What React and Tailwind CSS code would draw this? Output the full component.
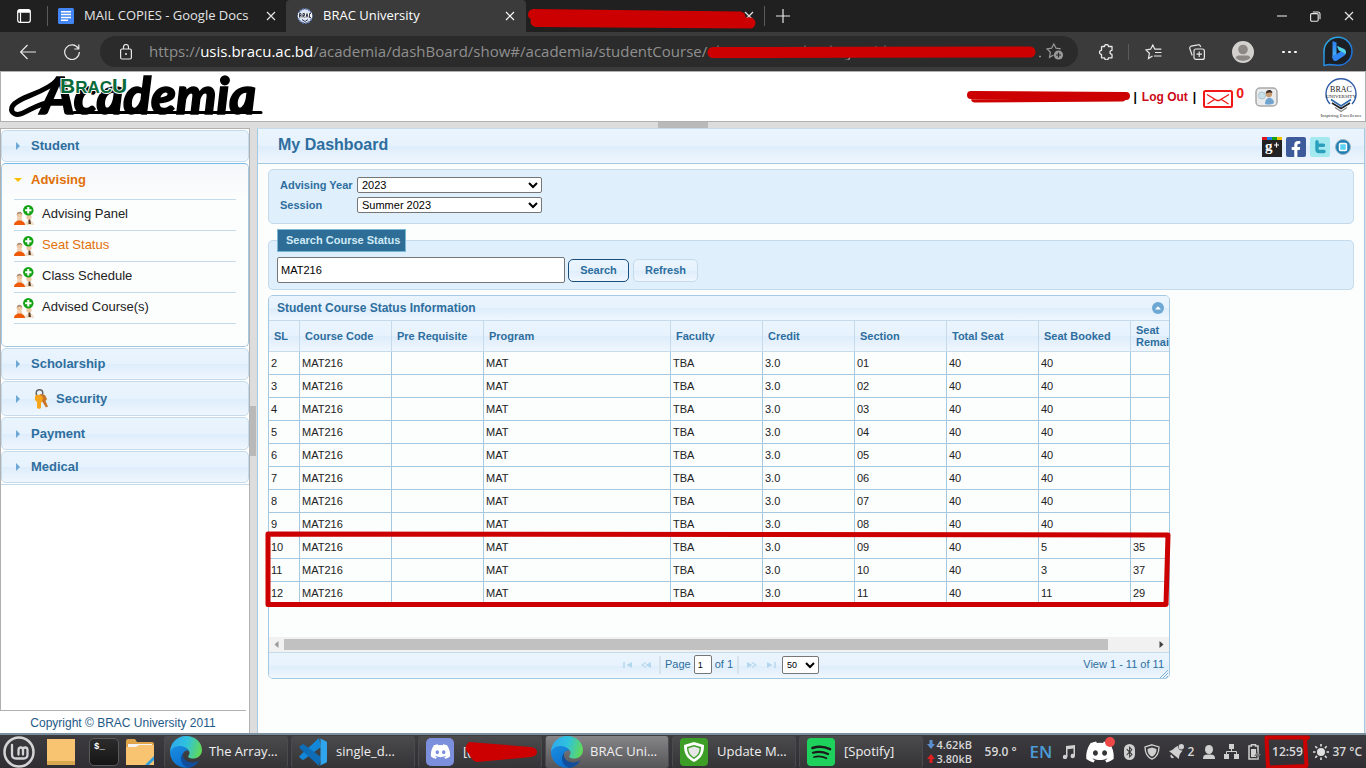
import React from "react";
import { FaDiscord, FaBluetoothB, FaFacebookF } from "react-icons/fa";

const glass = "bg-[linear-gradient(#eaf4fd_0%,#e6f2fd_50%,#deedfb_51%,#eff6fe_100%)]";
const ui = "font-['Open_Sans','Noto_Sans',sans-serif]";

function Close({ className = "" }) {
  return (
    <svg viewBox="0 0 10 10" className={"h-[10px] w-[10px] " + className} fill="none" stroke="currentColor" strokeWidth="1.2">
      <path d="M1 1l8 8M9 1L1 9" />
    </svg>
  );
}

function BracSeal() {
  return (
    <svg viewBox="0 0 16 16" className="h-4 w-4">
      <circle cx="8" cy="8" r="7" fill="#dfe6f3" stroke="#6d86c4" strokeWidth="1.6" strokeDasharray="2 1" />
      <path d="M1 5h14v5H1z" fill="#f4f4f4" />
      <path d="M2.500 9.500V5.500h1.500v4M2.500 7.500H4M6 9.500v-4h1.500v2L6 7.500l1.500 2M9 9.500l1-4 1 4M14 5.500h-1.500v4H14M5 11.500l3 2 3-2" fill="none" stroke="#333a50" strokeWidth="1" />
    </svg>
  );
}

function TabStrip() {
  return (
    <div className={"flex h-8 shrink-0 items-center bg-[#202020] text-[13px] text-[#e4e4e4] " + ui}>
      <button aria-label="Tab actions" className="flex h-5 w-12 shrink-0 items-center justify-center border-r border-[#5a5a5a] text-white">
        <svg viewBox="0 0 14 14" className="h-[14px] w-[14px]" fill="none" stroke="currentColor" strokeWidth="1.200">
          <rect x="0.700" y="0.700" width="12.600" height="12.600" rx="2" />
          <path d="M1 1.800h12M1 3h12" strokeWidth="1.600" />
          <path d="M3.500 3.500V13" />
        </svg>
      </button>
      <div className="flex h-8 w-[238px] shrink-0 items-center px-[10px]">
        <svg viewBox="0 0 16 16" className="h-4 w-4 shrink-0">
          <rect width="16" height="16" rx="1.500" fill="#4285f4" />
          <path d="M3 3.800h10M3 6.600h10M3 9.400h10M3 12.200h7" stroke="#fff" strokeWidth="1.500" />
        </svg>
        <span className="ml-[10px] flex-1 whitespace-nowrap">MAIL COPIES - Google Docs</span>
        <button aria-label="Close tab"><Close /></button>
      </div>
      <div className="flex h-8 w-[240px] shrink-0 items-center rounded-t-[4px] bg-[#3b3b3b] px-[11px] text-white">
        <BracSeal />
        <span className="ml-[10px] flex-1 whitespace-nowrap">BRAC University</span>
        <button aria-label="Close tab"><Close /></button>
      </div>
      <div className="relative flex h-8 w-[238px] shrink-0 items-center justify-end pr-[10px]">
        <button aria-label="Close tab"><Close /></button>
        <svg viewBox="0 0 230 22" className="absolute left-[1px] top-2 h-[22px] w-[230px]" fill="none" stroke="#cc0000" strokeLinecap="round" strokeLinejoin="round" strokeWidth="11">
          <path d="M6.500 6.500L213 9" />
          <path d="M9 13.500L223 15" />
        </svg>
      </div>
      <div className="h-5 w-px bg-[#5a5a5a]" />
      <button aria-label="New tab" className="ml-[11px]">
        <svg viewBox="0 0 14 14" className="h-[14px] w-[14px]" stroke="#e8e8e8" strokeWidth="1.200"><path d="M7 0v14M0 7h14" /></svg>
      </button>
      <div className="ml-auto flex items-center gap-[21px] pr-3">
        <button aria-label="Minimize" className="mr-[2px] h-[2px] w-[10px] bg-[#8a8a8a]" />
        <button aria-label="Restore" className="mr-[2px]">
          <svg viewBox="0 0 11 11" className="h-[11px] w-[11px]" fill="none" stroke="#e8e8e8" strokeWidth="1.100">
            <rect x="0.600" y="2.600" width="7.600" height="7.600" rx="1.200" />
            <path d="M2.800 1h5a2 2 0 0 1 2.200 2.200v5" />
          </svg>
        </button>
        <button aria-label="Close window">
          <Close className="h-3 w-3" />
        </button>
      </div>
    </div>
  );
}

function Toolbar() {
  return (
    <div className={"flex h-[39px] shrink-0 items-center bg-[#3b3b3b] pl-5 pr-[13px] text-[#e8e8e8] " + ui}>
      <button aria-label="Back">
        <svg viewBox="0 0 16 16" className="h-4 w-4" fill="none" stroke="currentColor" strokeWidth="1.200"><path d="M16 8H.8M7.500 1L.6 8l6.900 7" /></svg>
      </button>
      <button aria-label="Refresh page" className="ml-7">
        <svg viewBox="0 0 16 16" className="h-4 w-4" fill="none" stroke="currentColor" strokeWidth="1.200"><path d="M14.300 4.500A7.300 7.300 0 1 0 15.300 8M14.800 .500v4.500h-4.500" /></svg>
      </button>
      <div className="ml-5 flex h-[31px] flex-1 items-center rounded-full bg-[#2b2b2b] pl-5 pr-[14px] text-[15px]">
        <svg viewBox="0 0 12 16" className="h-4 w-3 shrink-0" fill="none" stroke="currentColor" strokeWidth="1.200">
          <rect x="0.600" y="5" width="10.800" height="10" rx="1.500" />
          <path d="M3.500 5V3a2.500 2.500 0 0 1 5 0v2" />
          <circle cx="6" cy="10" r="1" fill="currentColor" stroke="none" />
        </svg>
        <span className="ml-[17px] whitespace-nowrap text-[#8f8f8f]">
          https://<span className="text-white">usis.bracu.ac.bd</span>/academia/dashBoard/show#/academia/studentCourse/
        </span>
        <svg viewBox="0 0 335 16" preserveAspectRatio="none" className="h-4 min-w-0 max-w-[335px] flex-1">
          <path d="M11 1.500v3M98 1.500v3M124 1.500v3M169 2v3M178 1.500v3" stroke="#777" strokeWidth="1.200" />
          <path d="M143 13l-1.500 3-3 .2M332 12.500h2" stroke="#8f8f8f" strokeWidth="1.500" fill="none" />
          <path d="M6 8.500L150 8.200L323 8" stroke="#cc0000" strokeWidth="11" strokeLinecap="round" />
        </svg>
        <button aria-label="Add to favorites" className="ml-auto text-[#9a9a9a]">
          <svg viewBox="0 0 18 17" className="h-[17px] w-[18px]" fill="none" stroke="currentColor" strokeWidth="1.200">
            <path d="M7.500 12l-4 2.300.900-5L.9 5.900l4.700-.7L7.800 1l2.200 4.200 4.700.7" />
            <circle cx="12.500" cy="12" r="4.600" fill="currentColor" stroke="none" />
            <path d="M12.500 9.500v5M10 12h5" stroke="#2b2b2b" />
          </svg>
        </button>
      </div>
      <button aria-label="Extensions" className="ml-5">
        <svg viewBox="0 0 16 16" className="h-4 w-4" fill="none" stroke="currentColor" strokeWidth="1.300" strokeLinejoin="round">
          <path d="M4 2.500h2.500a2 2 0 0 1 4 0H14V6.300a2 2 0 0 0 0 4v3.500h-3.500a2 2 0 0 1-4 0H3.500v-3.500a2 2 0 0 1 0-4V3z" />
        </svg>
      </button>
      <div className="ml-[14px] h-4 w-px bg-[#5a5a5a]" />
      <button aria-label="Favorites" className="ml-4">
        <svg viewBox="0 0 17 16" className="h-4 w-[17px]" fill="none" stroke="currentColor" strokeWidth="1.200">
          <path d="M7.500 12l-4 2.500.900-5.200L.9 5.900l4.700-.7L7.800 1l2 4.200h6.500M10 8.500h6.500M9 12h7.500" />
        </svg>
      </button>
      <button aria-label="Collections" className="ml-[27px]">
        <svg viewBox="0 0 16 16" className="h-4 w-4" fill="none" stroke="currentColor" strokeWidth="1.200">
          <rect x="5" y="5" width="10.400" height="10.400" rx="2" />
          <path d="M10.200 7.500v5.500M7.500 10.200H13M3.200 11.500L.8 4.500a2 2 0 0 1 1.200-2.300L9 .8a2 2 0 0 1 2.300 1.200l.3 1" />
        </svg>
      </button>
      <button aria-label="Profile" className="ml-[27px]">
        <svg viewBox="0 0 22 22" className="h-[22px] w-[22px]">
          <circle cx="11" cy="11" r="11" fill="#d3d1ce" />
          <circle cx="11" cy="8.500" r="4.800" fill="#8b8885" />
          <path d="M3.500 17c1-2 2-2.500 4-2.500h7c2 0 3 .5 4 2.500a11 11 0 0 1-15 0z" fill="#8b8885" />
        </svg>
      </button>
      <button aria-label="Settings and more" className="ml-7 flex gap-[3px]">
        <i className="h-[2px] w-[3px] rounded-full bg-white" /><i className="h-[2px] w-[3px] rounded-full bg-white" /><i className="h-[2px] w-[3px] rounded-full bg-white" />
      </button>
      <button aria-label="Bing" className="ml-[26px]">
        <svg viewBox="0 0 30 31" className="h-[31px] w-[30px]">
          <defs>
            <linearGradient id="bing" x1="0" y1="0" x2="1" y2="1"><stop offset="0" stopColor="#2fb6ea" /><stop offset="1" stopColor="#1b62d8" /></linearGradient>
            <linearGradient id="bb" x1="0" y1="0" x2="0" y2="1"><stop offset="0" stopColor="#2a7bf0" /><stop offset="1" stopColor="#49b8f5" /></linearGradient>
          </defs>
          <path d="M1 29.500V15A14 14 0 1 1 15 29.300L6 28.500z" fill="#1c2025" stroke="url(#bing)" strokeWidth="1.500" strokeLinejoin="round" />
          <path d="M9.500 5l4 1.500v13l-4 2.500z" fill="url(#bb)" />
          <path d="M9.500 20l4-2 4.500-2.500-2-1-2-4.500 7 3c2.500 1.500 2.500 5 .5 6.500L14 24.500c-2.500 1.500-4.500-.5-4.500-2.500z" fill="#2f86f5" />
          <path d="M14 10l7 3c2 1.200 2.500 3.500 1.300 5.200-1-1.700-2.800-2.200-4.300-2.700l-2-1z" fill="#58d6e2" />
        </svg>
      </button>
    </div>
  );
}

function AcademiaLogo() {
  return (
    <a href="#home" className="relative block h-12 w-[260px]">
      <svg viewBox="0 0 260 48" className="h-12 w-[260px] overflow-visible">
        <path d="M48 8C38 20 8 24 4 34c-2 7 5 9 11 6 9-4 17-10 29-11" fill="none" stroke="#000" strokeWidth="5" strokeLinecap="round" />
        <path d="M66 39.500h187" stroke="#000" strokeWidth="3" strokeLinecap="round" />
        <text x="33" y="41" fontFamily="Lato" fontStyle="italic" fontWeight="900" fontSize="51" fill="#000" stroke="#000" strokeWidth="1.500">Academia</text>
        <text x="52" y="20" fontFamily="Liberation Sans" fontWeight="700" fontSize="21" fill="#0a6b3a" stroke="#fff" strokeWidth="2" paintOrder="stroke">B<tspan fontSize="17">RAC</tspan>U</text>
      </svg>
    </a>
  );
}

function PageHeader() {
  return (
    <header className="flex h-[51px] shrink-0 items-center border border-[#b0b0b0] bg-white pl-[7px] pr-[3px]">
      <AcademiaLogo />
      <div className="ml-auto flex items-center text-[12px] font-bold text-black">
        <svg viewBox="0 0 166 16" className="h-4 w-[166px]" fill="none" stroke="#cc0000" strokeLinecap="round" strokeWidth="8">
          <path d="M5 6L160 7M9 9.500L156 8.500" />
        </svg>
        <span className="ml-[2px]">|</span>
        <a href="#logout" className="mx-[5px] text-[#cc0a18]">Log Out</a>
        <span>|</span>
        <a href="#messages" aria-label="Messages" className="ml-[7px] mt-1">
          <svg viewBox="0 0 30 18" className="h-[18px] w-[30px]" fill="none" stroke="#f01818">
            <rect x="1" y="1" width="28" height="16" rx="1.500" strokeWidth="2" />
            <path d="M4 4.500l10 6 2 0 10-6M4.500 14l7-4.500M25.500 14l-7-4.500" strokeWidth="1.300" />
          </svg>
        </a>
        <span className="mb-[6px] ml-[3px] text-[14px] text-[#f01818]">0</span>
        <a href="#profile" aria-label="Profile card" className="ml-[11px]">
          <svg viewBox="0 0 23 20" className="h-5 w-[23px]">
            <rect x="1" y="1" width="21" height="18" rx="4" fill="#e9ebed" stroke="#a9a9a9" strokeWidth="1.500" />
            <circle cx="7" cy="8.500" r="3.500" fill="#c9dfe8" stroke="#a9c4d2" />
            <circle cx="14" cy="7" r="3.200" fill="#c79a72" />
            <path d="M10.800 6.500c0-4.500 6.600-4.500 6.600-.5-2-.8-4-1-6.600.5z" fill="#3b2c25" />
            <path d="M10 17c0-8 9-8 9-1-2 1.500-6 2-9 1z" fill="#6fa3d0" />
          </svg>
        </a>
        <svg viewBox="0 0 42 42" className="ml-[42px] h-[42px] w-[42px] overflow-visible">
          <path d="M10 28A15 15 0 1 1 32 28" fill="none" stroke="#2f5aa5" strokeWidth="1.400" />
          <text x="21" y="16" textAnchor="middle" fontFamily="Liberation Serif" fontWeight="400" fontSize="8" fill="#222">BRAC</text>
          <text x="21" y="22" textAnchor="middle" fontFamily="Liberation Serif" fontWeight="400" fontSize="5" fill="#222">UNIVERSITY</text>
          <path d="M11 23.500l10 6.500 10-6.500" fill="none" stroke="#2f6ab0" strokeWidth="1.600" />
          <path d="M12 27l9 5.500 9-5.500" fill="none" stroke="#222" strokeWidth="1.500" />
          <path d="M15 31.500l6 4 6-4" fill="none" stroke="#8a8a8a" strokeWidth="1.300" />
          <text x="21" y="41" textAnchor="middle" fontFamily="Liberation Serif" fontWeight="400" fontSize="5" fill="#333">Inspiring Excellence</text>
        </svg>
      </div>
    </header>
  );
}

function UsersIcon() {
  return (
    <svg viewBox="0 0 20 20" className="h-5 w-5 shrink-0">
      <circle cx="5.500" cy="10" r="2.800" fill="#ecc7a4" />
      <path d="M2.700 10c0-4.500 5.600-4.500 5.600 0-1-2-4-2-5.600 0z" fill="#a58a6f" />
      <path d="M3.500 12h4l1 4h-6z" fill="#f0d0b0" />
      <path d="M0 20c0-6 11-6 11 0z" fill="#ee5a08" />
      <circle cx="15" cy="12" r="2.600" fill="#ecc7a4" />
      <path d="M11 20c0-6 9-6 9 0z" fill="#efdfcc" />
      <path d="M14.500 14.500h1.800L17 19h-2.500z" fill="#5b3a20" />
      <circle cx="14.300" cy="5.200" r="5.200" fill="#12a312" />
      <path d="M14.300 2v6.400M11.100 5.200h6.400" stroke="#fff" strokeWidth="2" />
    </svg>
  );
}

function KeysIcon() {
  return (
    <svg viewBox="0 0 20 20" className="h-5 w-5">
      <circle cx="8.500" cy="4" r="3.300" fill="none" stroke="#666" strokeWidth="1.500" />
      <path d="M9 5l5 1 2 4-1.500 2 2.500 5.500-2 1L9 9z" fill="#c8742a" />
      <path d="M4 6.500l5-1 3 3-1 4.500-1 .500v5.500l-2 1-2-1v-6l-2-2z" fill="#f7a51c" />
    </svg>
  );
}

function Section({ label, height = "h-8", children }) {
  return (
    <button className={"mb-px flex w-full items-center rounded-[5px] border border-[#c5dbec] pl-[14px] text-left text-[13px] font-bold text-[#2e6e9e] " + glass + " " + height}>
      <svg viewBox="0 0 4 8" className="mr-[11px] h-2 w-1"><path d="M0 0l4 4-4 4z" fill="#6da8d5" /></svg>
      {children}
      <span>{label}</span>
    </button>
  );
}

const links = ["Advising Panel", "Seat Status", "Class Schedule", "Advised Course(s)"];

function Sidebar() {
  return (
    <aside className="flex w-[250px] shrink-0 flex-col border-r border-t border-[#b0b0b0] bg-white">
      <nav className="flex-1 border-l border-[#b0b0b0] pt-px">
        <Section label="Student" />
        <div className="mb-px rounded-[5px] border border-[#a6c9e2] border-t-[#79b7e7] bg-[#fcfdfd] pb-[22px]">
          <button className="flex h-[35px] w-full items-center rounded-t-[5px] bg-[linear-gradient(#f4f7f9,#fcfdfd)] pb-[3px] pl-3 text-[13px] font-bold text-[#e17009]">
            <svg viewBox="0 0 8 4" className="mr-[9px] h-1 w-2"><path d="M0 0h8L4 4z" fill="#f9bd01" /></svg>
            Advising
          </button>
          <ul className="mx-3 border-t border-[#c5dbec]">
            {links.map((l) => (
              <li key={l} className="h-[31px] border-b border-[#c5dbec]">
                <a href="#nav" className={"flex h-full items-start gap-2 pt-[5px] text-[13px] leading-[18px] " + (l === "Seat Status" ? "text-[#e17009]" : "text-[#222222]")}>
                  <UsersIcon />
                  {l}
                </a>
              </li>
            ))}
          </ul>
        </div>
        <Section label="Scholarship" />
        <Section label="Security" height="h-[35px]">
          <span className="mr-[5px]"><KeysIcon /></span>
        </Section>
        <Section label="Payment" height="h-[33px]" />
        <Section label="Medical" />
        <div className="h-px bg-[#c5dbec]" />
      </nav>
      <footer className="mr-[3px] h-[23px] border-t border-[#b0b0b0] text-center text-[12px] leading-6 text-[#1d5987]">Copyright © BRAC University 2011</footer>
    </aside>
  );
}

const columns = ["SL", "Course Code", "Pre Requisite", "Program", "Faculty", "Credit", "Section", "Total Seat", "Seat Booked", "Seat Remaining"];
const booked = { 10: [5, 35], 11: [3, 37], 12: [11, 29] };
const rows = Array.from({ length: 11 }, (_, i) => {
  const sl = i + 2;
  const [b, r] = booked[sl] || [40, ""];
  return [sl, "MAT216", "", "MAT", "TBA", "3.0", String(i + 1).padStart(2, "0"), 40, b, r];
});

function PagerArrow({ flip, bar, label }) {
  return (
    <button aria-label={label} disabled>
      <svg viewBox="0 0 11 6" className={"h-[6px] w-[11px]" + (flip ? " rotate-180" : "")}>
        <path d="M10 0v6L4.500 3z" fill="#b5d7ee" />
        {bar ? <path d="M2 0v6" stroke="#b5d7ee" strokeWidth="1.500" /> : <path d="M5 .5L1 3l4 2.500" stroke="#b5d7ee" fill="none" strokeWidth="1.200" />}
      </svg>
    </button>
  );
}

function Grid() {
  return (
    <section className="mt-[5px] w-[902px] max-w-full rounded-[5px] border border-[#a6c9e2] bg-[#fcfdfd]">
      <div className={"flex h-[25px] items-center justify-between rounded-t-[4px] border-b border-[#c5dbec] pl-2 pr-[5px] " + glass}>
        <h2 className="text-[12px] font-bold text-[#2e6e9e]">Student Course Status Information</h2>
        <button aria-label="Collapse grid">
          <svg viewBox="0 0 12 12" className="h-3 w-3"><circle cx="6" cy="6" r="6" fill="#6da8d5" /><path d="M3 7.500h6L6 4.300z" fill="#fff" /></svg>
        </button>
      </div>
      <div className="relative min-h-[316px]">
        <div className="overflow-hidden">
          <table className="w-[954px] table-fixed border-separate border-spacing-0 text-left text-[11px]">
            <colgroup>
              <col className="w-[31px]" /><col className="w-[92px]" /><col className="w-[92px]" /><col className="w-[187px]" />
              {columns.slice(4).map((c) => <col key={c} className="w-[92px]" />)}
            </colgroup>
            <thead>
              <tr>
                {columns.map((c) => (
                  <th key={c} className={"h-[31px] border-b border-r border-[#c5dbec] py-0 pl-[5px] font-bold leading-3 text-[#2e6e9e] " + glass + (c === "Seat Remaining" ? " pr-6" : " pr-0")}>{c}</th>
                ))}
              </tr>
            </thead>
            <tbody className="text-[#222222]">
              {rows.map((r) => (
                <tr key={r[0]}>
                  {r.map((v, i) => <td key={i} className="h-[23px] border-b border-r border-[#a6c9e2] px-[2px] py-0 leading-4">{v}</td>)}
                </tr>
              ))}
            </tbody>
          </table>
        </div>
        <svg viewBox="0 0 906 78" className="pointer-events-none absolute -left-1 top-[210px] h-[78px] w-[906px]" fill="none" stroke="#cc0000" strokeWidth="5" strokeLinejoin="round">
          <path d="M3 3L903 4L901 73.500L3 73.500z" />
        </svg>
      </div>
      <div className="flex h-[15px] items-center bg-[#f1f1f1]">
        <svg viewBox="0 0 15 15" className="h-[15px] w-[15px]"><path d="M9.500 4v7L5.500 7.500z" fill="#9a9a9a" /></svg>
        <div className="flex-1"><div className="h-[11px] w-[94.700%] bg-[#c1c1c1]" /></div>
        <svg viewBox="0 0 15 15" className="h-[15px] w-[15px]"><path d="M5.500 4v7l4-3.500z" fill="#404040" /></svg>
      </div>
      <div className={"relative flex h-[26px] items-center justify-center rounded-b-[4px] border-t border-[#c5dbec] pb-[2px] pl-[3px] text-[11px] text-[#2e6e9e] " + glass}>
        <div className="flex items-center">
          <PagerArrow bar label="First page" />
          <span className="w-2" />
          <PagerArrow label="Previous page" />
          <span className="ml-[7px] h-[18px] w-[2px] bg-[#d8e2ea]" />
          <label htmlFor="page" className="ml-1">Page</label>
          <input id="page" defaultValue="1" className="mx-[3px] h-[19px] w-[18px] rounded-[2px] border border-[#767676] bg-white px-[3px] text-[9px] text-black" />
          <span>of 1</span>
          <span className="ml-1 h-[18px] w-[2px] bg-[#d8e2ea]" />
          <span className="w-[7px]" />
          <PagerArrow flip label="Next page" />
          <span className="w-[9px]" />
          <PagerArrow flip bar label="Last page" />
          <select aria-label="Rows per page" className="ml-[5px] h-[18px] w-[37px] rounded-[2px] border border-[#767676] bg-white text-[9px] text-black"><option>50</option></select>
        </div>
        <span className="absolute right-[5px] top-[3px] leading-4">View 1 - 11 of 11</span>
        <svg viewBox="0 0 8 8" className="absolute bottom-0 right-[1px] h-2 w-2" stroke="#7fb0d4" strokeWidth="1"><path d="M0 8l8-8M3 8l5-5M6 8l2-2" /></svg>
      </div>
    </section>
  );
}

const selectCls = "h-4 w-[185px] rounded-[2px] border border-[#767676] bg-white text-[11px] leading-[14px] text-black font-normal";

function Main() {
  return (
    <main className="mr-px flex-1 border border-b-0 border-[#a6c9e2] border-t-[#c5dbec] bg-[#fcfdfd]">
      <div className={"flex h-[35px] items-center border-b border-[#a6c9e2] pl-5 pr-[13px] " + glass}>
        <h1 className="pb-[2px] text-[16px] font-bold text-[#2e6e9e]">My Dashboard</h1>
        <div className="ml-auto flex items-center gap-1 pt-[2px]">
          <a href="#gplus" aria-label="Google Plus">
            <svg viewBox="0 0 20 20" className="h-5 w-5">
              <rect width="20" height="20" fill="#222" />
              <path d="M0 1.500h5" stroke="#d9161b" strokeWidth="3" /><path d="M5 1.500h5" stroke="#1e7df0" strokeWidth="3" /><path d="M10 1.500h5" stroke="#14a014" strokeWidth="3" /><path d="M15 1.500h5" stroke="#f2c200" strokeWidth="3" />
              <text x="3" y="14" fontFamily="Liberation Serif" fontWeight="700" fontSize="15" fill="#fff">g</text>
              <path d="M14.500 5.500v5M12 8h5" stroke="#fff" strokeWidth="1.200" />
            </svg>
          </a>
          <a href="#facebook" aria-label="Facebook" className="flex h-5 w-5 items-end justify-end rounded-[2px] bg-[#3d5b9b] pr-[2px] text-[16px] text-white"><FaFacebookF /></a>
          <a href="#twitter" aria-label="Twitter" className="flex h-5 w-5 items-center justify-center rounded-[2px] bg-[#a5e9f0]">
            <svg viewBox="0 0 12 14" className="h-[14px] w-3"><path d="M3 1.800v7.700q0 2 2 2h5M3 5.300h6.500" fill="none" stroke="#2aa0bd" strokeWidth="3.400" strokeLinecap="round" /></svg>
          </a>
          <a href="#share" aria-label="Share" className="pl-[1px]">
            <svg viewBox="0 0 16 16" className="h-4 w-4"><circle cx="8" cy="8" r="7.500" fill="#1d7fb5" stroke="#9fb4c0" /><rect x="4.500" y="4.500" width="7" height="7" rx="1" fill="#5fd0f5" stroke="#fff" strokeWidth="1.500" /></svg>
          </a>
        </div>
      </div>
      <div className="px-[10px] pt-[5px]">
        <div className="grid h-[55px] grid-cols-[77px_185px] content-start gap-y-1 rounded-[5px] border border-[#c5dbec] bg-[#dfeffc] pl-[11px] pt-[7px] text-[11px] font-bold leading-4 text-[#2e6e9e]">
          <label htmlFor="year">Advising Year</label>
          <select id="year" className={selectCls}><option>2023</option></select>
          <label htmlFor="session">Session</label>
          <select id="session" className={selectCls}><option>Summer 2023</option></select>
        </div>
        <fieldset className="mt-[5px] rounded-[5px] border border-[#c5dbec] bg-[#dfeffc] px-2 pb-[6px] pt-[5px]">
          <legend className="h-[23px] border border-[#79b7d7] bg-[#2e6e96] pl-2 pr-[5px] text-[11px] font-bold leading-[21px] text-[#cfeaf7]">Search Course Status</legend>
          <div className="flex items-center">
            <input aria-label="Course code" defaultValue="MAT216" className="h-[26px] w-72 rounded-[2px] border border-[#767676] bg-white px-[3px] text-[11px] text-black" />
            <button className={"ml-[3px] h-[23px] w-[61px] rounded-[5px] border border-[#1a4f7c] text-[11px] font-bold text-[#2e6e9e] " + glass}>Search</button>
            <button className={"ml-1 h-[23px] w-[65px] rounded-[5px] border border-[#c5dbec] text-[11px] font-bold text-[#2e6e9e] " + glass}>Refresh</button>
          </div>
        </fieldset>
        <Grid />
      </div>
    </main>
  );
}

function EdgeIcon() {
  return (
    <svg viewBox="0 0 32 32" className="h-8 w-8 shrink-0">
      <defs>
        <linearGradient id="eg" x1="0" y1="0.300" x2="1" y2="0.500"><stop offset="0" stopColor="#2fa8ec" /><stop offset="0.500" stopColor="#2fc2df" /><stop offset="1" stopColor="#62d957" /></linearGradient>
        <linearGradient id="eb" x1="0" y1="0" x2="0.600" y2="1"><stop offset="0" stopColor="#1a8fe0" /><stop offset="1" stopColor="#0c6fd0" /></linearGradient>
      </defs>
      <path d="M16 0C26 0 32 7 32 14c0 6-5 8.500-9 8.500-4 0-5.500-1.500-4.500-2.700 1.500-1.800 1.500-4.300-.5-6.300-5-5-14-2-18 3C0 7 7 0 16 0z" fill="url(#eg)" />
      <path d="M0 16c2-5 8-7 13-5.500 3 1 5.500 3 6 5.500-1-1.500-3-2-4.500-.5C10 20 12 28 21 30.500 10 35 0 26 0 16z" fill="url(#eb)" />
      <path d="M13 17c-1 5 3 10 10 9.500 2 0 4.500-1 6.500-2.500-2 4-6 7.500-11 7.900C11 30 9 22 13 17z" fill="#114f9c" />
    </svg>
  );
}

function CodeIcon() {
  return (
    <svg viewBox="0 0 28 28" className="h-7 w-7 shrink-0">
      <path d="M20 0L1 17.500c-.8.800-.8 1.500 0 2.200L3 21.500c.6.500 1.300.4 2 0L22 9z" fill="#1488d8" />
      <path d="M20 28L1 10.500c-.8-.8-.8-1.500 0-2.200L3 6.500c.6-.5 1.300-.4 2 0L22 19z" fill="#0f6db8" />
      <path d="M20 0l7 3.300c.6.300 1 1 1 1.700v18c0 .7-.4 1.400-1 1.700L20 28c1-.5 1.500-1 1.500-2V2c0-1-.5-1.500-1.500-2z" fill="#2fa5ee" />
    </svg>
  );
}

function ShieldApp() {
  return (
    <svg viewBox="0 0 28 28" className="h-7 w-7 shrink-0">
      <rect width="28" height="28" rx="4" fill="#3d9e27" />
      <path d="M14 4l10 3c0 8-2 13-10 17C6 20 4 15 4 7z" fill="#fff" />
      <path d="M14 7l7 2c0 6-2 9-7 12-5-3-7-6-7-12z" fill="#3d9e27" />
      <path d="M14 8.500l5.500 1.700c0 4-1.500 6.800-5.500 9.100-4-2.300-5.500-5.100-5.500-9.100z" fill="#e6e6e6" />
    </svg>
  );
}

function SpotifyApp() {
  return (
    <svg viewBox="0 0 28 28" className="h-7 w-7 shrink-0" fill="none" stroke="#1b1b1b" strokeLinecap="round">
      <rect width="28" height="28" rx="4" fill="#1ed05c" stroke="none" />
      <path d="M5.500 10c6-2 12-1.500 17.500 1.200" strokeWidth="2.600" />
      <path d="M6 14.700c5-1.500 10.500-1 15 1.300" strokeWidth="2.200" />
      <path d="M7 19c4-1 8.500-.7 12.500 1.200" strokeWidth="1.800" />
    </svg>
  );
}

function Task({ icon, label, active, children }) {
  return (
    <button className={"relative flex h-8 w-[124px] min-w-0 items-center rounded-[3px] border-x border-[#4b4b4e] text-[13px] text-[#efefef] " + (active ? "bg-[linear-gradient(#858588,#555558)]" : "bg-[linear-gradient(#4b4b4e,#343436)]")}>
      <span className="flex w-11 shrink-0 justify-center pl-1 pr-[6px]">{icon}</span>
      <span className="whitespace-nowrap">{label}</span>
      {children}
    </button>
  );
}

function Tray() {
  const ic = "fill-[#d0d0d0]";
  return (
    <div className="ml-auto flex shrink-0 items-center gap-[9px] whitespace-nowrap pr-1 text-[12px] font-semibold text-[#d8d8d8]">
      <div className="grid w-[49px] grid-cols-[10px_39px] text-[11px] leading-[14px]">
        <svg viewBox="0 0 8 9" className="mt-[2px] h-[9px] w-2"><path d="M2.500 0h3v4H8L4 9 0 4h2.500z" fill="#5c8fd0" /></svg>
        <span>4.62kB</span>
        <svg viewBox="0 0 8 9" className="mt-[2px] h-[9px] w-2"><path d="M2.500 9h3V5H8L4 0 0 5h2.500z" fill="#e02020" /></svg>
        <span>3.80kB</span>
      </div>
      <span className="w-9">59.0 °</span>
      <span className="w-[23px] text-[17px] text-[#4a9bd8]">EN</span>
      <svg viewBox="0 0 14 14" className={"h-[14px] w-[14px] " + ic}><path d="M4 1l9-1v11h-1.500V3.500l-6 .7V12H4z" /><circle cx="3" cy="12" r="2.200" /><circle cx="10.700" cy="11" r="2.200" /></svg>
      <span className="relative text-[30px] text-white">
        <FaDiscord />
        <i className="absolute right-0 top-0 h-[10px] w-[10px] rounded-full bg-[#f04747]" />
      </span>
      <span className="flex h-4 w-[11px] items-center justify-center rounded-full bg-[#d0d0d0] text-[12px] text-[#333]"><FaBluetoothB /></span>
      <svg viewBox="0 0 16 16" className="h-4 w-4" fill="none" stroke="#d0d0d0"><path d="M8 .8l7 2.200c0 6-2 10-7 12.200C3 13 1 9 1 3z" strokeWidth="1.300" /><path d="M8 3.500l4.500 1.500c0 4-1.500 6-4.500 7.800C5 11 3.500 9 3.500 5z" fill="#d0d0d0" stroke="none" /></svg>
      <span className="flex items-center gap-1">
        <svg viewBox="0 0 15 15" className={"h-[15px] w-[15px] " + ic}><path d="M0 7c4 0 5-4 9-5a4 4 0 0 0 4.500 4.500C12 9 10 10 10 15L5.500 11.500z" /><path d="M2 10.500l3 3a2 2 0 0 1-3-3z" /><circle cx="12.300" cy="2.700" r="2.700" /></svg>
        2
      </span>
      <svg viewBox="0 0 12 14" className={"h-[14px] w-3 " + ic}><ellipse cx="6" cy="4.500" rx="4" ry="4.500" /><path d="M0 14c0-4 2-4.500 6-4.500s6 .5 6 4.500z" /></svg>
      <svg viewBox="0 0 15 15" className="h-[15px] w-[15px]"><path d="M5 0h5v5H5zM0 10h5v5H0zM10 10h5v5h-5z" fill="#d0d0d0" /><path d="M7.500 4v3.500M2.500 11V7.500h10V11" stroke="#d0d0d0" fill="none" /></svg>
      <svg viewBox="0 0 13 16" className="h-4 w-[13px]"><path d="M1 2h2.500V.8h4V2H10v13H1z" fill="none" stroke="#d0d0d0" strokeWidth="1.500" /><path d="M3 5h5v8H3z" fill="#d0d0d0" /><path d="M10 7l-4 5h3l-1 4 5-6h-3z" fill="#777" /></svg>
      <span className="relative w-[34px] text-center">
        12:59
        <svg viewBox="0 0 46 35" className="absolute -left-[6px] -top-2 h-[35px] w-[46px]" fill="none" stroke="#cc0000" strokeWidth="4" strokeLinejoin="round"><path d="M2.500 2.500H44L41 4l1.500 27L4 32.500z" /></svg>
      </span>
      <span className="flex items-center gap-[3px]">
        <svg viewBox="0 0 16 16" className="h-4 w-4"><circle cx="8" cy="8" r="4" fill="#e0e0e0" /><path d="M8 0v2.500M8 13.500V16M0 8h2.500M13.500 8H16M2.300 2.300l1.800 1.800M11.900 11.900l1.800 1.800M13.700 2.300l-1.800 1.800M4.100 11.900l-1.800 1.800" stroke="#e0e0e0" strokeWidth="1.600" /></svg>
        37 °C
      </span>
    </div>
  );
}

function Taskbar() {
  return (
    <div className={"flex h-[35px] shrink-0 items-center border-t-2 border-[#7b8f9c] bg-[linear-gradient(#3c3b3e,#302e33)] pl-[3px] " + ui}>
      <button aria-label="Menu">
        <svg viewBox="0 0 32 32" className="h-8 w-8" fill="none" stroke="#d4d4d4">
          <circle cx="16" cy="16" r="14.500" strokeWidth="2.500" />
          <path d="M9 9v9.500q0 4 4 4h7.500q4 0 4-4V14q0-2.500-2.300-2.500T20 14v4.500M20 14q0-2.500-2.200-2.500T15.500 14v4.500" strokeWidth="2.300" strokeLinecap="round" />
        </svg>
      </button>
      <button aria-label="Desktop" className="ml-3 h-[26px] w-7 border-b-4 border-[#d9a750] bg-[#f8c471]" />
      <button aria-label="Terminal" className="ml-[14px] h-7 w-[30px] rounded-[5px] border border-[#5a5a5a] bg-[linear-gradient(#2c2c2c,#151515)] pb-2 pl-1 text-left font-['Liberation_Mono',monospace] text-[9px] font-bold text-white">$_</button>
      <button aria-label="Files" className="ml-[7px]">
        <svg viewBox="0 0 28 26" className="h-[26px] w-7"><path d="M0 2q0-2 2-2h7l2 3h15q2 0 2 2v19H0z" fill="#e0a44a" /><path d="M2 5h24v4H2z" fill="#f4f4f4" /><path d="M0 8h10l3-2h15v20H0z" fill="#f8c471" /><path d="M19 26l9-9v4l-5 5z" fill="#2f9fe0" /></svg>
      </button>
      <div className="ml-[10px] flex gap-[3px]">
        <Task icon={<EdgeIcon />} label="The Array…" />
        <Task icon={<CodeIcon />} label="single_d…" />
        <Task
          icon={<span className="flex h-7 w-7 items-center justify-center rounded-[5px] bg-[#7b8fdc] text-[21px] text-white"><FaDiscord /></span>}
          label="[("
        >
          <svg viewBox="0 0 74 20" className="absolute left-[44px] top-[6px] h-5 w-[74px]"><path d="M6 0L68 5q6 1 6 5t-6 5L14 20q-5-1-8-8Q-1 6 6 0z" fill="#cc0000" /></svg>
        </Task>
        <Task icon={<EdgeIcon />} label="BRAC Uni…" active />
        <Task icon={<ShieldApp />} label="Update M…" />
        <Task icon={<SpotifyApp />} label="[Spotify]" />
      </div>
      <Tray />
    </div>
  );
}

export default function App() {
  return (
    <div className="flex min-h-screen flex-col bg-[#dddddd] font-['Liberation_Sans',Arial,sans-serif]">
      <TabStrip />
      <Toolbar />
      <PageHeader />
      <div className="flex h-[6px] shrink-0 justify-center"><span className="w-[50px] bg-[#b9b9b9]" /></div>
      <div className="flex flex-1">
        <Sidebar />
        <div className="flex w-[7px] shrink-0 items-center"><span className="h-[50px] w-[6px] bg-[#b9b9b9]" /></div>
        <Main />
      </div>
      <Taskbar />
    </div>
  );
}
